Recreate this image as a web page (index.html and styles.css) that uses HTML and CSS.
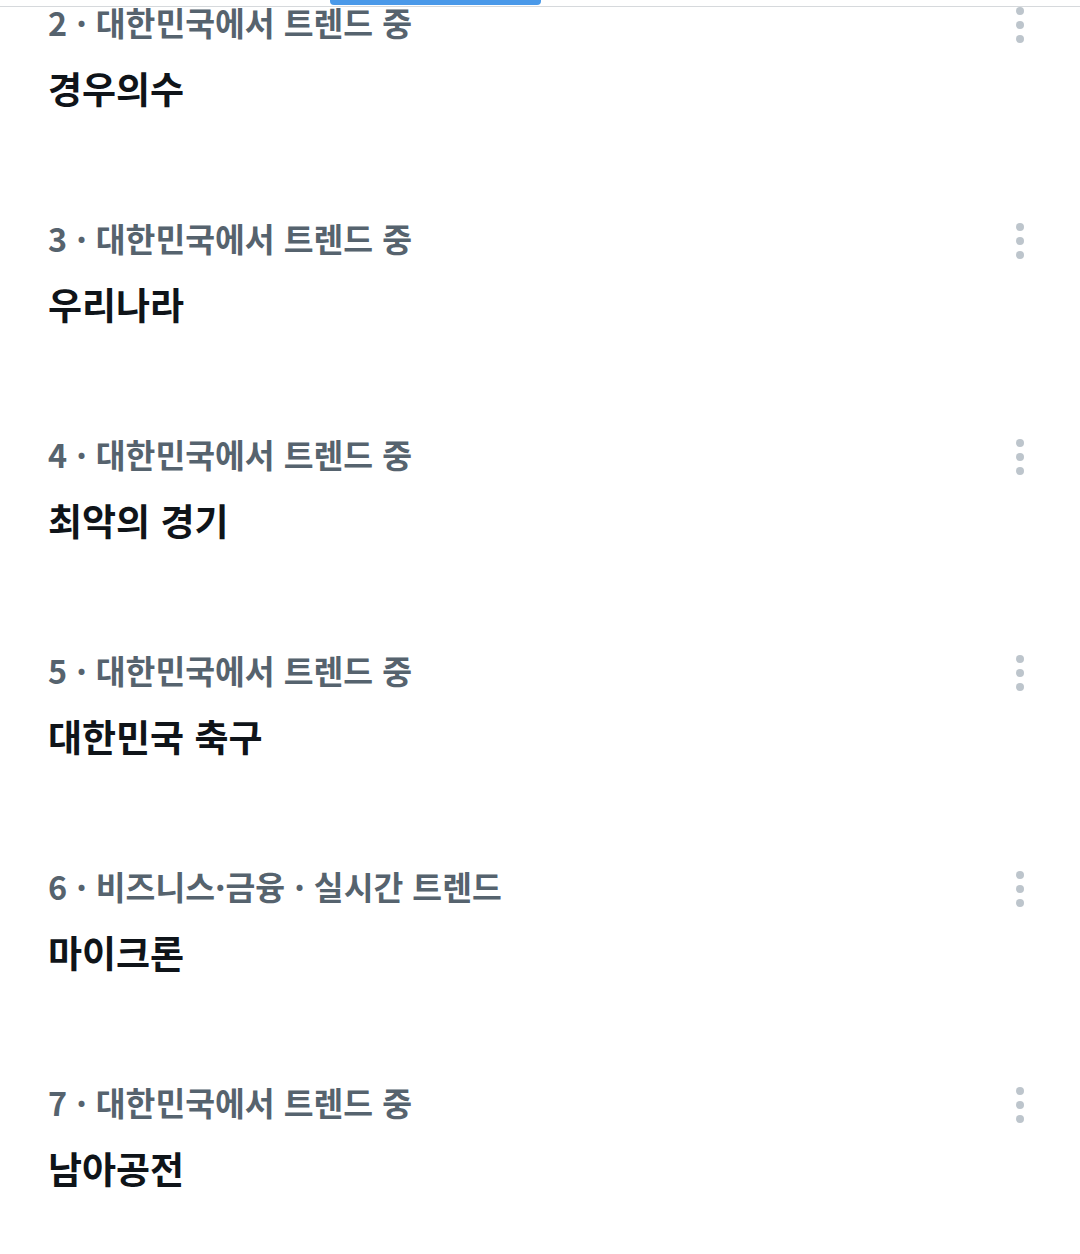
FILE: index.html
```html
<!DOCTYPE html>
<html lang="ko">
<head>
<meta charset="utf-8">
<link rel="stylesheet" href="styles.css">
</head>
<body>
<div class="topbar"><div class="indicator"></div></div>
<ul class="trends">
  <li class="trend">
    <div class="meta"><span>2 · 대한민국에서 트렌드 중</span><span class="more"><i></i><i></i><i></i></span></div>
    <div class="title">경우의수</div>
  </li>
  <li class="trend">
    <div class="meta"><span>3 · 대한민국에서 트렌드 중</span><span class="more"><i></i><i></i><i></i></span></div>
    <div class="title">우리나라</div>
  </li>
  <li class="trend">
    <div class="meta"><span>4 · 대한민국에서 트렌드 중</span><span class="more"><i></i><i></i><i></i></span></div>
    <div class="title">최악의 경기</div>
  </li>
  <li class="trend">
    <div class="meta"><span>5 · 대한민국에서 트렌드 중</span><span class="more"><i></i><i></i><i></i></span></div>
    <div class="title">대한민국 축구</div>
  </li>
  <li class="trend">
    <div class="meta"><span>6 · 비즈니스·금융 · 실시간 트렌드</span><span class="more"><i></i><i></i><i></i></span></div>
    <div class="title">마이크론</div>
  </li>
  <li class="trend">
    <div class="meta"><span>7 · 대한민국에서 트렌드 중</span><span class="more"><i></i><i></i><i></i></span></div>
    <div class="title">남아공전</div>
  </li>
</ul>
</body>
</html>
```
FILE: styles.css
```css
html, body {
  margin: 0;
  padding: 0;
  background: #ffffff;
  overflow: hidden;
}
body {
  width: 1080px;
  height: 1254px;
  position: relative;
  font-family: "Noto Sans CJK KR", "Noto Sans", sans-serif;
}
.topbar {
  position: absolute;
  top: 0;
  left: 0;
  width: 1080px;
  height: 6px;
  border-bottom: 1px solid #d6d9dc;
  z-index: 2;
}
.indicator {
  margin-left: 330px;
  width: 211px;
  height: 5px;
  background: #4a99e9;
  border-radius: 0 0 4px 4px;
}
.trends {
  list-style: none;
  margin: 0;
  padding: 0;
}
.trend {
  height: 216px;
  box-sizing: border-box;
  padding: 4px 0 0 48px;
}
.meta {
  display: flex;
  align-items: center;
  justify-content: space-between;
  height: 36px;
  line-height: 36px;
  font-size: 32.4px;
  font-weight: 700;
  color: #56636e;
  padding-right: 56px;
}
.more {
  display: flex;
  flex-direction: column;
  gap: 6px;
  margin-top: 6px;
}
.more i {
  display: block;
  width: 8px;
  height: 8px;
  border-radius: 50%;
  background: #bdc5cc;
}
.title {
  margin-top: 26px;
  height: 44px;
  line-height: 44px;
  font-size: 37px;
  font-weight: 700;
  color: #0f1419;
}
```
